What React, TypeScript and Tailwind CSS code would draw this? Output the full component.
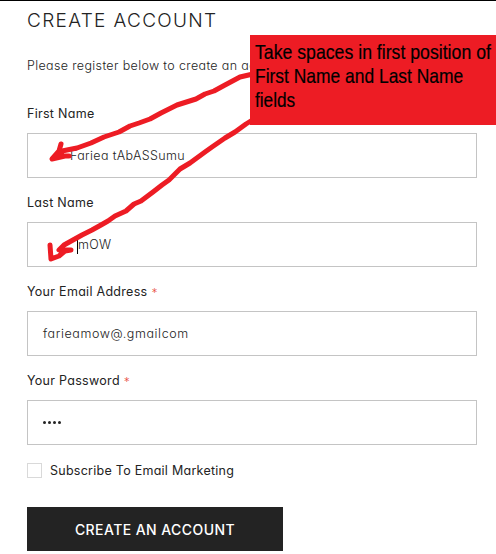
import type { ReactNode } from "react";

function Field({ label, required, children }: { label: string; required?: boolean; children: ReactNode }) {
  return (
    <div className="flex h-[89px] flex-col">
      <label className="flex h-[30px] items-center gap-[4px] pb-[7px] text-[12.5px] font-[430] tracking-[0.29px] text-[#232323]">
        {label}
        {required && <span className="text-[12px] font-light text-[#e95144]">*</span>}
      </label>
      <div className="flex h-[45px] items-center border border-[#c4c4c4] px-[15px] pt-[2px] text-[12.5px] font-light tracking-[0.35px] text-[#232323]">
        {children}
      </div>
    </div>
  );
}

function Annotation() {
  return (
    <>
      <svg className="pointer-events-none absolute inset-0" width="496" height="554" fill="none" stroke="#ed1c24" strokeWidth="5" strokeLinecap="round" strokeLinejoin="round">
        <path d="M253 73L240 76L225 84L214 90L205 93L196 98L177 104L161 112L150 118L139 122L130 125L119 131L104 136L91 142L77 147L62 150" />
        <path d="M61 143L59 150L52 158L65 155L69 155L58 155L62 151" />
        <path d="M254 118L246 123L235 131L225 137L212 146L205 151L190 162L180 168L169 179L162 184L153 191L141 200L134 203L126 210L115 215L108 220L101 224L92 229L82 234L73 239L64 244L59 249L71 249L65 250L59 255L51 258L50 244" />
      </svg>
      <div className="absolute left-[250px] top-[34px] h-[90px] w-[246px] overflow-hidden bg-[#ed1c24] pl-[5px] pt-[5px] text-[21px] leading-[24px] text-black" style={{ fontFamily: '"Liberation Sans", Arial, sans-serif' }}>
        <div className="origin-left whitespace-nowrap scale-x-[0.842] [-webkit-text-stroke:0.2px_black]">Take spaces in first position of</div>
        <div className="origin-left whitespace-nowrap scale-x-[0.83] [-webkit-text-stroke:0.2px_black]">First Name and Last Name</div>
        <div className="origin-left whitespace-nowrap scale-x-[0.82] [-webkit-text-stroke:0.2px_black]">fields</div>
      </div>
    </>
  );
}

export default function App() {
  return (
    <main className="relative h-[554px] w-[496px] overflow-hidden border-t border-black bg-white pl-[27px] font-['Inter',sans-serif] [font-feature-settings:'cv11']">
      <h1 className="flex h-[39px] items-center whitespace-nowrap pt-[2px] text-[19px] font-light tracking-[1.33px] text-[#232323]">CREATE ACCOUNT</h1>
      <p className="flex h-[52px] items-center whitespace-nowrap text-[12.5px] font-light tracking-[0.35px] text-[#232323]">Please register below to create an account</p>
      <form className="w-[450px] pt-[11px]">
        <Field label="First Name"><span className="pl-[27px]">Fariea tAbASSumu</span></Field>
        <Field label="Last Name">
          <span className="ml-[34px] h-[16px] w-px bg-black" />
          <span>mOW</span>
        </Field>
        <Field label="Your Email Address" required><span className="tracking-[0.6px]">farieamow@.gmailcom</span></Field>
        <Field label="Your Password" required>
          <span className="-mt-[2px] flex gap-[2px]">
            {[0, 1, 2, 3].map((i) => <i key={i} className="size-[3px] rounded-full bg-[#232323]" />)}
          </span>
        </Field>
        <label className="mt-[4px] flex h-[15px] items-center gap-[8px] text-[12.5px] tracking-[0.26px] text-[#232323]">
          <span className="size-[15px] border border-[#d9d9d9]" />
          <span className="pt-px font-[430]">Subscribe To Email Marketing</span>
        </label>
        <button type="button" className="mt-[29px] flex h-[44px] w-[256px] items-center justify-center bg-[#232323] text-[14px] font-[480] tracking-[0.43px] text-white">CREATE AN ACCOUNT</button>
      </form>
      <Annotation />
    </main>
  );
}
